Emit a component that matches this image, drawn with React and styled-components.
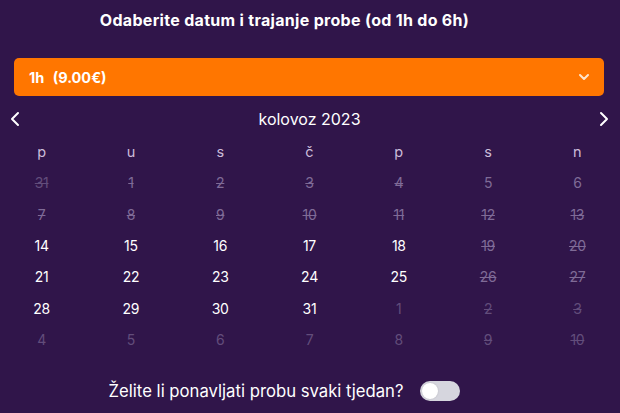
import React, { useState } from "react";
import styled, { createGlobalStyle } from "styled-components";

const Global = createGlobalStyle`
  html, body { margin: 0; padding: 0; background: #30154a; }
  body { font-family: "Inter", "Open Sans", sans-serif; }
`;

const Page = styled.div`
  width: 620px;
  height: 413px;
  background: #30154a;
  color: #fff;
  display: flex;
  flex-direction: column;
  overflow: hidden;
`;

const Title = styled.h2`
  margin: 9px 0 0;
  text-align: center;
  padding-right: 51px;
  font-size: 16px;
  font-weight: 700;
  letter-spacing: 0.3px;
  line-height: 22px;
`;

const Select = styled.div`
  margin: 27px 16px 0 14px;
  height: 38px;
  background: #ff7600;
  border-radius: 5px;
  display: flex;
  align-items: center;
  justify-content: space-between;
  padding: 0 14px 0 15px;
  font-size: 14.5px;
  font-weight: 700;
  word-spacing: 5px;
`;

const MonthBar = styled.div`
  margin-top: 11px;
  display: flex;
  align-items: center;
  justify-content: space-between;
  padding: 0 9px 0 8px;
  height: 24px;
`;

const MonthLabel = styled.div`
  font-size: 16px;
  font-weight: 400;
  padding-left: 0px;
`;

const NavBtn = styled.button`
  background: none;
  border: 0;
  padding: 0;
  width: 14px;
  height: 20px;
  display: flex;
  align-items: center;
  justify-content: center;
  color: #fff;
`;

const Grid = styled.div`
  margin: 5px -2px 0 -3px;
  display: grid;
  grid-template-columns: repeat(7, 1fr);
  grid-auto-rows: 31.3px;
  align-items: center;
  justify-items: center;
`;

const Weekday = styled.div`
  font-size: 14.5px;
  color: #cbbcd9;
`;

const Day = styled.div`
  font-size: 14px;
  letter-spacing: -0.3px;
  color: ${(p) =>
    p.$state === "active" ? "#ffffff" : p.$state === "disabled" ? "#7f6b97" : "#624d7b"};
  text-decoration: ${(p) => (p.$strike ? "line-through" : "none")};
  text-decoration-thickness: 1px;
`;

const Footer = styled.div`
  margin-top: 26px;
  display: flex;
  align-items: center;
  justify-content: center;
  gap: 17px;
  padding-right: 51px;
`;

const Question = styled.span`
  font-size: 16.7px;
  color: #fff;
`;

const Toggle = styled.button`
  width: 40px;
  height: 20px;
  border-radius: 10px;
  border: 0;
  padding: 2px;
  background: #d6d6de;
  display: flex;
  align-items: center;
  justify-content: ${(p) => (p.$on ? "flex-end" : "flex-start")};
  cursor: pointer;
  flex-shrink: 0;
`;

const Knob = styled.span`
  width: 16px;
  height: 16px;
  border-radius: 50%;
  background: #ffffff;
  box-shadow: 0 0 2px rgba(0,0,0,0.15);
`;

const weekdays = ["p", "u", "s", "č", "p", "s", "n"];

// [label, state, strike]
const days = [
  ["31", "out", true], ["1", "disabled", true], ["2", "disabled", true], ["3", "disabled", true], ["4", "disabled", true], ["5", "disabled", false], ["6", "disabled", false],
  ["7", "disabled", true], ["8", "disabled", true], ["9", "disabled", true], ["10", "disabled", true], ["11", "disabled", true], ["12", "disabled", true], ["13", "disabled", true],
  ["14", "active"], ["15", "active"], ["16", "active"], ["17", "active"], ["18", "active"], ["19", "disabled", true], ["20", "disabled", true],
  ["21", "active"], ["22", "active"], ["23", "active"], ["24", "active"], ["25", "active"], ["26", "disabled", true], ["27", "disabled", true],
  ["28", "active"], ["29", "active"], ["30", "active"], ["31", "active"], ["1", "out"], ["2", "out", true], ["3", "out", true],
  ["4", "out"], ["5", "out"], ["6", "out"], ["7", "out"], ["8", "out"], ["9", "out", true], ["10", "out", true],
];

const Chevron = ({ dir }) => (
  <svg width="10" height="16" viewBox="0 0 10 16" fill="none">
    <path
      d={dir === "left" ? "M8 2 L2 8 L8 14" : "M2 2 L8 8 L2 14"}
      stroke="#fff"
      strokeWidth="2"
      strokeLinecap="round"
      strokeLinejoin="round"
    />
  </svg>
);

export default function App() {
  const [on, setOn] = useState(false);
  return (
    <Page>
      <Global />
      <Title>Odaberite datum i trajanje probe (od 1h do 6h)</Title>
      <Select>
        <span>1h (9.00€)</span>
        <svg width="12" height="8" viewBox="0 0 12 8" fill="none">
          <path d="M2 2 L6 6 L10 2" stroke="#ffe6cc" strokeWidth="2" strokeLinecap="round" strokeLinejoin="round" />
        </svg>
      </Select>
      <MonthBar>
        <NavBtn aria-label="prev"><Chevron dir="left" /></NavBtn>
        <MonthLabel>kolovoz 2023</MonthLabel>
        <NavBtn aria-label="next"><Chevron dir="right" /></NavBtn>
      </MonthBar>
      <Grid>
        {weekdays.map((w, i) => (
          <Weekday key={"w" + i}>{w}</Weekday>
        ))}
        {days.map(([l, s, st], i) => (
          <Day key={i} $state={s} $strike={st}>{l}</Day>
        ))}
      </Grid>
      <Footer>
        <Question>Želite li ponavljati probu svaki tjedan?</Question>
        <Toggle $on={on} onClick={() => setOn(!on)} aria-label="toggle">
          <Knob />
        </Toggle>
      </Footer>
    </Page>
  );
}
